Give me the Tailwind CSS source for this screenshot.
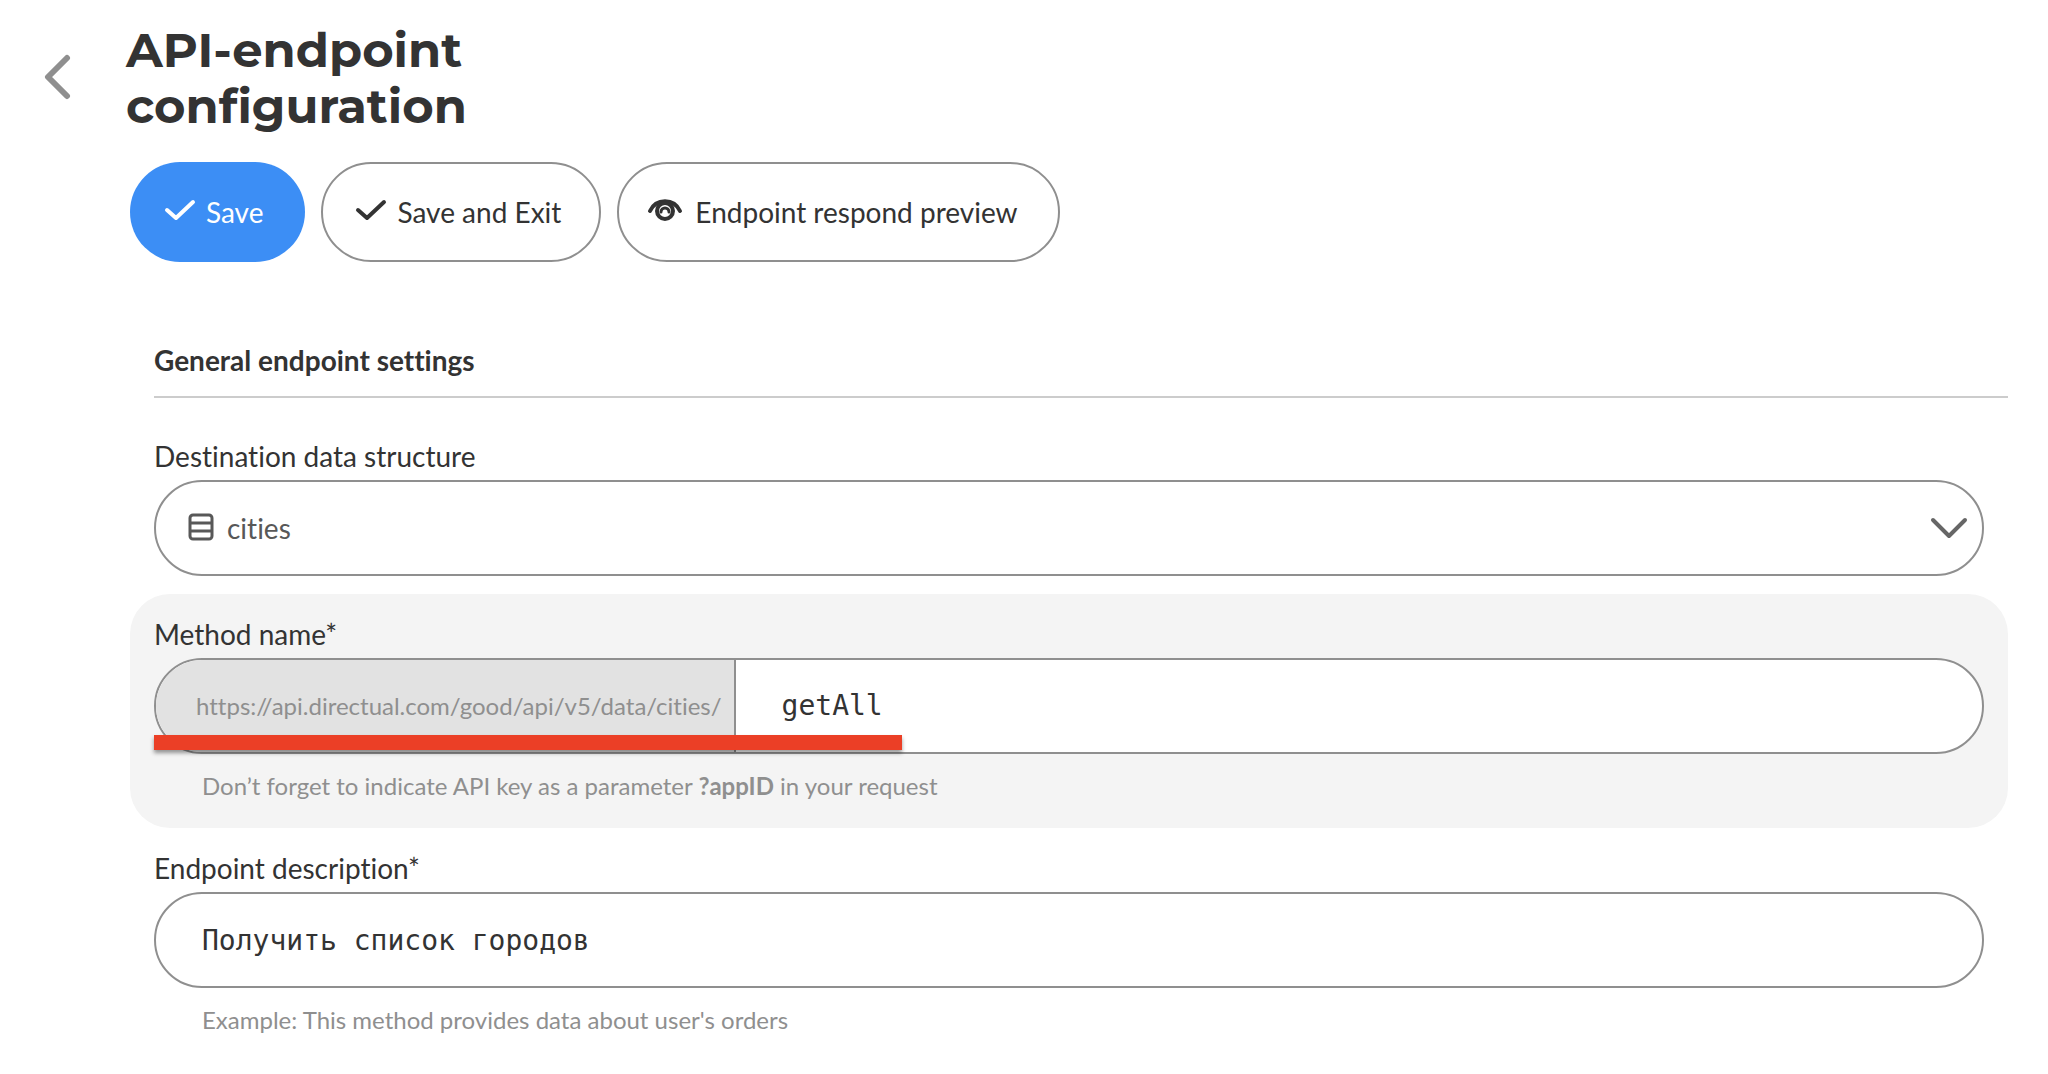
<!DOCTYPE html>
<html lang="en">
<head>
  <meta charset="UTF-8" />
  <meta name="viewport" content="width=device-width, initial-scale=1.0"/>
  <title>API-endpoint configuration</title>
  <script src="https://cdn.jsdelivr.net/npm/@tailwindcss/browser@4"></script>
</head>
<body class="bg-white min-h-screen font-['Lato',sans-serif] [font-variant-ligatures:none] text-[28px] leading-8 text-[#333333]">

  <!-- Page header -->
  <header class="flex items-center pt-[22px] pl-11">
    <a href="#" aria-label="Back" class="w-[82px] shrink-0 text-[#8f8f8f]">
      <svg width="28" height="48" viewBox="0 0 28 48" fill="none" stroke="currentColor" stroke-width="6" stroke-linecap="round" stroke-linejoin="round"><path d="M23 4L4 23L23 42"/></svg>
    </a>
    <h1 class="w-[400px] font-['Montserrat','Inter',sans-serif] font-bold text-5xl leading-14">API-endpoint configuration</h1>
  </header>

  <main class="pl-[130px] pr-10 pt-7">

    <!-- Actions -->
    <div class="flex gap-4">
      <button type="button" class="flex items-center gap-2 h-[100px] pl-[34px] pr-[42px] rounded-[50px] bg-[#3c8ef5] text-white">
        <svg class="mb-1" width="34" height="24" viewBox="0 0 34 24" fill="none" stroke="currentColor" stroke-width="4" stroke-linecap="round" stroke-linejoin="round"><path d="M3 12L12 20L29 4"/></svg>
        Save
      </button>
      <button type="button" class="flex items-center gap-2 h-[100px] pl-8 pr-[38px] rounded-[50px] border-2 border-[#8f8f8f]">
        <svg class="mb-1" width="34" height="24" viewBox="0 0 34 24" fill="none" stroke="currentColor" stroke-width="4" stroke-linecap="round" stroke-linejoin="round"><path d="M3 12L12 20L29 4"/></svg>
        Save and Exit
      </button>
      <button type="button" class="flex items-center gap-3 h-[100px] pl-7 pr-10 rounded-[50px] border-2 border-[#8f8f8f]">
        <svg class="mb-1" width="36" height="24" viewBox="0 0 36 24" fill="none" stroke="currentColor" stroke-linecap="round">
          <path d="M3 13C9 0 27 0 33 13" stroke-width="4"/>
          <circle cx="18" cy="13" r="8" stroke-width="4"/>
          <path d="M14 14A4 4 0 0 1 22 14" stroke-width="3"/>
        </svg>
        Endpoint respond preview
      </button>
    </div>

    <form>
      <h2 class="ml-6 mt-[82px] pb-5 border-b-2 border-[#cccccc] font-bold">General endpoint settings</h2>

      <!-- Destination -->
      <div class="px-6 pt-[42px] pb-[18px]">
        <label for="structure" class="block mb-2">Destination data structure</label>
        <div class="relative">
          <select id="structure" class="appearance-none block w-full h-24 pl-[71px] pr-20 rounded-full border-2 border-[#8f8f8f] bg-white text-[#585858]">
            <option>cities</option>
          </select>
          <svg class="absolute left-[34px] top-8 pointer-events-none" width="26" height="30" viewBox="0 0 26 30" fill="none" stroke="#585858" stroke-width="3"><rect x="2" y="3" width="22" height="24" rx="3"/><path d="M2 11H24M2 19H24"/></svg>
          <svg class="absolute right-4 top-9 pointer-events-none" width="38" height="24" viewBox="0 0 38 24" fill="none" stroke="#666666" stroke-width="4" stroke-linecap="round" stroke-linejoin="round"><path d="M3 4L19 20L35 4"/></svg>
        </div>
      </div>

      <!-- Method name -->
      <div class="px-6 pt-6 pb-[26px] rounded-[40px] bg-[#f4f4f4]">
        <label for="method" class="block mb-2">Method name*</label>
        <div class="relative">
          <div class="flex h-24 rounded-full border-2 border-[#8f8f8f] bg-white overflow-hidden">
            <span class="flex items-center shrink-0 pl-10 pr-3 border-r-2 border-[#8f8f8f] bg-[#e2e2e2] text-2xl text-[#8f8f8f]">https://api.directual.com/good/api/v5/data/cities/</span>
            <input id="method" type="text" value="getAll" class="grow min-w-0 pl-[46px] pr-10 font-['DejaVu_Sans_Mono',monospace] outline-none" />
          </div>
          <!-- Red underline over the full URL -->
          <div class="absolute left-0 bottom-1 w-[748px] h-[15px] bg-[#eb3f26] shadow-[0_3px_4px_rgba(0,0,0,0.4)]"></div>
        </div>
        <p class="mt-4 ml-12 text-2xl leading-8 text-[#8f8f8f]">Don’t forget to indicate API key as a parameter <b>?appID</b> in your request</p>
      </div>

      <!-- Description -->
      <div class="px-6 pt-6">
        <label for="description" class="block mb-2">Endpoint description*</label>
        <input id="description" type="text" value="Получить список городов" class="block w-full h-24 px-[46px] rounded-full border-2 border-[#8f8f8f] font-['DejaVu_Sans_Mono',monospace]" />
        <p class="mt-4 ml-12 text-2xl leading-8 text-[#8f8f8f]">Example: This method provides data about user's orders</p>
      </div>
    </form>
  </main>

</body>
</html>
